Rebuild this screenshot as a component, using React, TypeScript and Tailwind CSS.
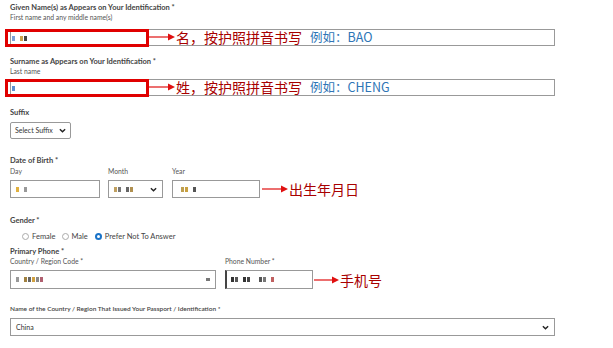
const LATO = { fontFamily: "Lato, 'Noto Sans', sans-serif" };

function Blur({ colors }: { colors: string[] }) {
  return (
    <span className="flex items-center gap-[1px]">
      {colors.map((c, i) => (
        <span key={i} className="inline-block h-[5px] w-[3px]" style={{ background: c }} />
      ))}
    </span>
  );
}

function Label({ children }: { children: React.ReactNode }) {
  return <div className="text-[7.5px] leading-[10px] font-bold text-[#444]">{children}</div>;
}

function Sub({ children }: { children: React.ReactNode }) {
  return <div className="text-[6.8px] leading-[9px] text-[#555]">{children}</div>;
}

function Chevron() {
  return (
    <svg width="7" height="5" viewBox="0 0 8 5" className="shrink-0">
      <path d="M1 1 L4 4 L7 1" fill="none" stroke="#222" strokeWidth="1.6" />
    </svg>
  );
}

function Arrow({ w }: { w: number }) {
  return (
    <svg width={w} height="8" viewBox={`0 0 ${w} 8`} className="shrink-0">
      <line x1="0" y1="4" x2={w - 6} y2="4" stroke="#e01010" strokeWidth="1.2" />
      <path d={`M${w - 7} 0.5 L${w} 4 L${w - 7} 7.5 Z`} fill="#e01010" />
    </svg>
  );
}

const CJK = { fontFamily: "'Noto Sans CJK SC', 'Noto Sans', sans-serif" };

function NameRow({ note, example, blur }: { note: string; example: string; blur: string[] }) {
  return (
    <div className="relative h-[17px] w-[545px] border border-[#999] bg-white">
      <div className="absolute left-[-6px] top-[-1px] h-[18px] w-[144px] border-[3px] border-[#e00000] flex items-center pl-[4px]">
        <Blur colors={blur} />
      </div>
      <div className="absolute left-[138px] top-[-4px] flex items-center h-[22px]" style={CJK}>
        <Arrow w={26} />
        <span className="ml-[1px] text-[14px] text-[#a80000] leading-none">{note}</span>
        <span className="ml-[8px] text-[12.5px] text-[#2e75b6] leading-none">{example}</span>
      </div>
    </div>
  );
}

export default function App() {
  return (
    <div className="w-[613px] h-[348px] bg-white pl-[10px] pt-[3px] overflow-hidden" style={LATO}>
      <Label>Given Name(s) as Appears on Your Identification *</Label>
      <Sub>First name and any middle name(s)</Sub>
      <div className="mt-[7px]">
        <NameRow note="名，按护照拼音书写" example="例如：BAO" blur={["#7aa0d8", "#ffffff", "#c9a24a", "#444"]} />
      </div>

      <div className="mt-[11px]">
        <Label>Surname as Appears on Your Identification *</Label>
        <Sub>Last name</Sub>
      </div>
      <div className="mt-[3px]">
        <NameRow note="姓，按护照拼音书写" example="例如：CHENG" blur={["#5b8fd0"]} />
      </div>

      <div className="mt-[12px]">
        <Label>Suffix</Label>
      </div>
      <div className="mt-[4px] flex h-[17px] w-[61px] items-center justify-between rounded-[2px] border border-[#999] px-[4px]">
        <span className="text-[7px] text-[#333]">Select Suffix</span>
        <Chevron />
      </div>

      <div className="mt-[17px]">
        <Label>Date of Birth *</Label>
      </div>
      <div className="mt-[1px] flex text-[6.8px] leading-[9px] text-[#555]">
        <span className="w-[98px]">Day</span>
        <span className="w-[64px]">Month</span>
        <span>Year</span>
      </div>
      <div className="mt-[4px] flex items-center">
        <div className="flex h-[18px] w-[90px] items-center border border-[#999] pl-[5px]">
          <Blur colors={["#e0b040", "#ffffff", "#999"]} />
        </div>
        <div className="ml-[8px] flex h-[18px] w-[55px] items-center justify-between border border-[#999] px-[5px]">
          <Blur colors={["#c0a060", "#777", "#ffffff", "#666", "#b09050"]} />
          <Chevron />
        </div>
        <div className="ml-[9px] flex h-[18px] w-[88px] items-center border border-[#999] pl-[8px]">
          <Blur colors={["#bfa050", "#c9a040", "#ffffff", "#555"]} />
        </div>
        <div className="ml-[2px] flex items-center" style={CJK}>
          <Arrow w={26} />
          <span className="ml-[1px] text-[14px] text-[#a80000] leading-none">出生年月日</span>
        </div>
      </div>

      <div className="mt-[18px]">
        <Label>Gender *</Label>
      </div>
      <div className="mt-[5px] flex items-center pl-[12px] text-[7.5px] text-[#444]">
        <span className="h-[7px] w-[7px] rounded-full border border-[#aaa]" />
        <span className="ml-[3px]">Female</span>
        <span className="ml-[6px] h-[7px] w-[7px] rounded-full border border-[#aaa]" />
        <span className="ml-[3px]">Male</span>
        <span className="ml-[7px] flex h-[7px] w-[7px] items-center justify-center rounded-full bg-[#1a73c8]">
          <span className="h-[3px] w-[3px] rounded-full bg-white" />
        </span>
        <span className="ml-[3px]">Prefer Not To Answer</span>
      </div>

      <div className="mt-[5px]">
        <Label>Primary Phone *</Label>
      </div>
      <div className="flex text-[6.8px] leading-[9px] text-[#555]">
        <span className="w-[215px]">Country / Region Code *</span>
        <span>Phone Number *</span>
      </div>
      <div className="mt-[4px] flex items-center">
        <div className="flex h-[19px] w-[206px] items-center justify-between border border-[#999] px-[5px]">
          <Blur colors={["#999", "#ffffff", "#a08040", "#666", "#d0a040", "#888", "#b06070"]} />
          <span className="h-[3px] w-[4px] bg-[#777]" />
        </div>
        <div className="ml-[9px] flex h-[19px] w-[88px] items-center border border-[#999] border-l-[2px] border-l-[#444] pl-[4px]">
          <Blur colors={["#333", "#555", "#ffffff", "#333", "#444", "#ffffff", "#ffffff", "#555", "#777", "#ffffff", "#c06060"]} />
        </div>
        <div className="ml-[1px] flex items-center" style={CJK}>
          <Arrow w={25} />
          <span className="ml-[1px] text-[14px] text-[#a80000] leading-none">手机号</span>
        </div>
      </div>

      <div className="mt-[15px] text-[6.5px] leading-[10px] font-semibold text-[#444]">
        Name of the Country / Region That Issued Your Passport / Identification *
      </div>
      <div className="mt-[4px] flex h-[18px] w-[545px] items-center justify-between border border-[#999] px-[5px]">
        <span className="text-[7px] text-[#333]">China</span>
        <Chevron />
      </div>
    </div>
  );
}
